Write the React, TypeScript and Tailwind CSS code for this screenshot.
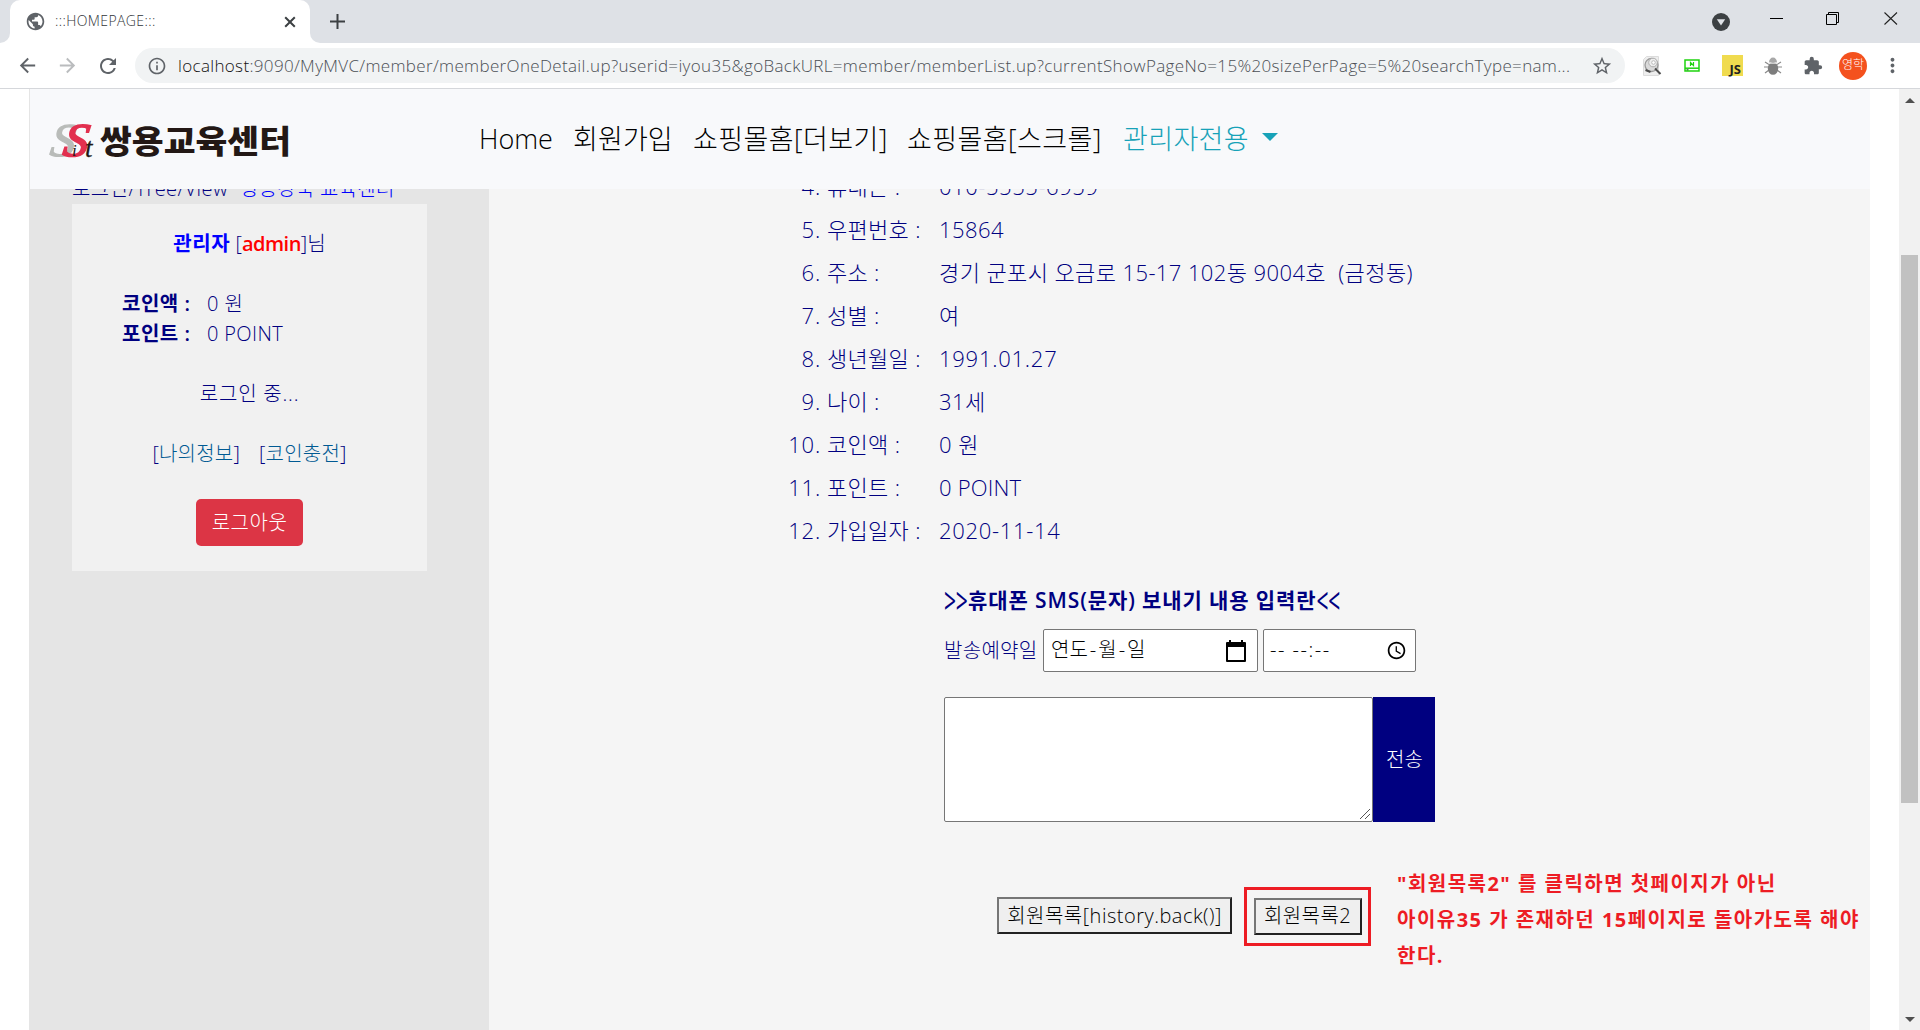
import {
  MdPublic, MdArrowBack, MdArrowForward, MdRefresh,
  MdInfoOutline, MdStarBorder, MdExtension, MdMoreVert, MdAccessTime,
} from "react-icons/md";

type Row = { no: string; label: string; value: string; track: string };

const rows: Row[] = [
  { no: "4.", label: "휴대폰 :", value: "010-5555-6959", track: "tracking-[0.56px]" },
  { no: "5.", label: "우편번호 :", value: "15864", track: "tracking-[0.45px]" },
  { no: "6.", label: "주소 :", value: "경기 군포시 오금로 15-17 102동 9004호  (금정동)", track: "tracking-[0.4px]" },
  { no: "7.", label: "성별 :", value: "여", track: "tracking-normal" },
  { no: "8.", label: "생년월일 :", value: "1991.01.27", track: "tracking-[0.75px]" },
  { no: "9.", label: "나이 :", value: "31세", track: "tracking-[0.4px]" },
  { no: "10.", label: "코인액 :", value: "0 원", track: "tracking-[0.5px]" },
  { no: "11.", label: "포인트 :", value: "0 POINT", track: "tracking-[0.2px]" },
  { no: "12.", label: "가입일자 :", value: "2020-11-14", track: "tracking-[0.7px]" },
];

function TabStrip() {
  return (
    <div className="flex h-[43px] shrink-0 bg-[#dee1e6]">
      <div className="w-[10px] bg-white">
        <div className="h-full rounded-br-[10px] bg-[#dee1e6]" />
      </div>
      <div className="flex w-[300px] items-center rounded-t-[10px] bg-white pl-[15px] pr-[14px]">
        <MdPublic className="mt-[-1px] size-[21px] text-[#5f6368]" />
        <span className="ml-[9px] mt-[-3px] flex-1 text-[14px] tracking-[0.4px] text-[#303438]">:::HOMEPAGE:::</span>
        <svg className="h-[12px] w-[12px]" viewBox="0 0 12 12" stroke="#3c4043" strokeWidth="2">
          <path d="M1.200 1.200l9.600 9.600M10.800 1.200l-9.600 9.600" />
        </svg>
      </div>
      <div className="w-[10px] bg-white">
        <div className="h-full rounded-bl-[10px] bg-[#dee1e6]" />
      </div>
      <svg className="ml-[10px] mt-[14px] h-[15px] w-[15px]" viewBox="0 0 15 15" stroke="#3c4043" strokeWidth="2">
        <path d="M7.500 0v15M0 7.500h15" />
      </svg>
      <div className="flex-1" />
      <svg className="mr-[40px] mt-[13px] h-[18px] w-[18px]" viewBox="0 0 18 18">
        <circle cx="9" cy="9" r="9" fill="#3c4043" />
        <path d="M4.8 6.3h8.4L9 12.4z" fill="#dee1e6" />
      </svg>
      <svg className="mr-[43px] mt-[12px] h-[14px] w-[13px]" viewBox="0 0 13 14">
        <path d="M0 6.5h13" stroke="#000" />
      </svg>
      <svg className="mr-[44px] mt-[12px] h-[13px] w-[14px]" viewBox="0 0 14 13" fill="none" stroke="#000">
        <path d="M.5 2.5h10v10H.5zM2.5 2.5v-2h10v10h-2" />
      </svg>
      <svg className="mr-[22px] mt-[12px] h-[13px] w-[14px]" viewBox="0 0 14 13" stroke="#222" strokeWidth="1.1">
        <path d="M.5.5l12.500 12M13 .5L.5 12.500" />
      </svg>
    </div>
  );
}

function Toolbar() {
  return (
    <div className="flex h-[46px] shrink-0 items-center border-b border-[#d5d7db] bg-white text-[#5f6368]">
      <MdArrowBack className="ml-[16px] size-[23px]" />
      <MdArrowForward className="ml-[17px] size-[23px] text-[#babcbe]" />
      <MdRefresh className="ml-[17px] size-[24px]" />
      <div className="ml-[15px] flex h-[35px] w-[1490px] items-center rounded-full bg-[#f1f3f4]">
        <MdInfoOutline className="ml-[12px] size-[20px]" />
        <div className="ml-[11px] w-[1400px] whitespace-pre text-[17px] leading-[35px] tracking-[0.34px] text-[#4b4f54]">
          <span className="text-[#111]">localhost</span>
          :9090/MyMVC/member/memberOneDetail.up?userid=iyou35&goBackURL=member/memberList.up?currentShowPageNo=15%20sizePerPage=5%20searchType=nam...
        </div>
        <MdStarBorder className="ml-[13px] size-[22px]" />
      </div>
      <svg className="ml-[18px] h-[20px] w-[19px]" viewBox="0 0 19 20" fill="none">
        <path d="M3.500.5H15.500v19H.5V3.500z" fill="#eee" stroke="#dcdcdc" />
        <circle cx="8.500" cy="9" r="6.500" fill="#dadada" stroke="#9a9a9a" strokeWidth="1.300" />
        <circle cx="10" cy="6.500" r="4.300" fill="#eee" stroke="#b0b0b0" />
        <circle cx="10.500" cy="6.500" r="1.800" fill="#fff" stroke="#bbb" />
        <path d="M2.500 14l5 2M12 12.500l5.500 5.500" stroke="#4b4b4b" strokeWidth="2" />
      </svg>
      <svg className="ml-[22px] h-[13px] w-[16px]" viewBox="0 0 16 13" fill="none">
        <path d="M1 1h14v11H1z" stroke="#1fd30f" strokeWidth="1.500" />
        <path d="M1 9.200h14" stroke="#1fd30f" strokeWidth="1.500" />
        <path d="M6.500 7V3.500l3 3V3" stroke="#1fd30f" strokeWidth="1.200" />
        <path d="M2.500 10.800h2" stroke="#0a5c05" />
      </svg>
      <div className="ml-[22px] flex size-[21px] items-end justify-end bg-[#f0db4f] pr-[2px] font-['Noto_Sans'] text-[13px] font-bold leading-[14px] text-[#222]">
        JS
      </div>
      <svg className="ml-[21px] h-[18px] w-[18px]" viewBox="0 0 18 18" fill="none">
        <path d="M1 5l4 2.500M17 5l-4 2.500M0 10h5M18 10h-5M1 16l4-3M17 16l-4-3" stroke="#8a8a8a" strokeWidth="1.200" />
        <path d="M5 5.500a4 5 0 0 1 8 0z" fill="#a8a8a8" />
        <ellipse cx="9" cy="11.500" rx="5.200" ry="6.300" fill="#7d7d7d" />
        <path d="M4.500 6.200h9" stroke="#eee" />
      </svg>
      <MdExtension className="ml-[21px] size-[20px]" />
      <div className="ml-[16px] flex size-[28px] items-center justify-center rounded-full bg-[#f4511e] pb-px text-[12px] text-white">
        영학
      </div>
      <MdMoreVert className="ml-[14px] size-[23px]" />
    </div>
  );
}

function Logo() {
  return (
    <svg className="ml-[18px] h-[48px] w-[250px]" viewBox="0 0 250 48">
      <g fontFamily="Liberation Serif" fontStyle="italic">
        <text transform="translate(1 41) skewX(-8)" fontSize="47" fill="#b9bcb9" stroke="#b9bcb9" strokeWidth="1.2" textLength="25" lengthAdjust="spacingAndGlyphs">S</text>
        <text transform="translate(14 41) skewX(-8)" fontSize="47" fill="#e2304f" stroke="#e2304f" strokeWidth="1.8" textLength="25" lengthAdjust="spacingAndGlyphs">S</text>
        <text x="24" y="41" fontSize="17" fill="#231815">i</text>
        <text x="37" y="41.500" fontSize="27" fill="#231815" stroke="#231815" strokeWidth=".3">t</text>
      </g>
      <text x="52" y="38" fontSize="31.500" fontWeight="900" fill="#231815" fontFamily="Noto Sans CJK KR" textLength="191" lengthAdjust="spacingAndGlyphs">
        쌍용교육센터
      </text>
    </svg>
  );
}

function NavBar() {
  return (
    <nav className="flex h-[100px] shrink-0 items-center bg-[#f8f9fb] text-[27px] text-black">
      <Logo />
      <div className="ml-[181px] flex items-center whitespace-pre pt-[1px]">
        <span className="w-[94px]">Home</span>
        <span className="w-[120px] tracking-[0.1px]">회원가입</span>
        <span className="w-[214px] tracking-[0.4px]">쇼핑몰홈[더보기]</span>
        <span className="w-[216px] tracking-[0.4px]">쇼핑몰홈[스크롤]</span>
        <span className="w-[139px] tracking-[0.36px] text-[#17a2b8]">관리자전용</span>
        <span className="mt-[-5px] border-x-[8px] border-t-[8px] border-x-transparent border-t-[#17a2b8]" />
      </div>
    </nav>
  );
}

function Sidebar() {
  return (
    <aside className="w-[459px] shrink-0 bg-[#e5e5e5] pl-[42px] text-[20px] leading-[30px] text-[#000080]">
      <div className="-mt-[15px] flex h-[30px] whitespace-pre">
        <span className="w-[168px] tracking-[0.4px]">로그인/Tree/View</span>
        <span className="tracking-[0.25px] text-[#0000ff]">쌍용강북 교육센터</span>
      </div>
      <div className="flex h-[367px] w-[355px] flex-col items-center bg-[#f1f1f1] pt-[25px]">
        <p className="whitespace-pre">
          <b className="font-semibold tracking-[0.6px] text-[#0000ff]">관리자</b> [<b className="font-semibold tracking-[-0.5px] text-[#ff0000]">admin</b>]님
        </p>
        <div className="mt-[30px] w-full whitespace-pre pl-[50px]">
          <div className="flex"><b className="w-[85px] font-semibold tracking-[0.5px]">코인액 :</b><span className="tracking-[0.5px]">0 원</span></div>
          <div className="flex"><b className="w-[85px] font-semibold tracking-[0.5px]">포인트 :</b><span className="tracking-[0.35px]">0 POINT</span></div>
        </div>
        <p className="mt-[30px] tracking-[0.8px]">로그인 중...</p>
        <div className="mt-[30px] flex gap-[19px]">
          <span className="tracking-[0.2px]">[<span className="text-[#005a93]">나의정보</span>]</span>
          <span className="tracking-[0.2px]">[<span className="text-[#005a93]">코인충전</span>]</span>
        </div>
        <div className="mt-[30px] flex h-[47px] w-[107px] items-center justify-center rounded-[5px] bg-[#dc3545] tracking-[0.5px] text-white">
          로그아웃
        </div>
      </div>
    </aside>
  );
}

function SmsForm() {
  return (
    <section className="ml-[455px] mt-[33px] text-[20px] text-[#000080]">
      <h2 className="flex whitespace-pre text-[21px] font-semibold leading-[30px] tracking-[0.9px]">
        <span className="w-[24px] scale-y-[1.7] font-normal tracking-[-0.3px]">{">>"}</span>
        <span>휴대폰 SMS(문자) 보내기 내용 입력란</span>
        <span className="scale-y-[1.7] font-normal tracking-[-0.3px]">{"<<"}</span>
      </h2>
      <div className="mt-[14px] flex items-center">
        <span className="w-[99px] tracking-[0.3px]">발송예약일</span>
        <div className="flex h-[43px] w-[215px] items-center justify-between rounded-[2px] border border-[#767676] bg-white pl-[7px] pr-[11px] text-black">
          <span className="flex pb-[2px]">연도<i className="px-[2px] not-italic">-</i>월<i className="px-[2px] not-italic">-</i>일</span>
          <svg className="h-[22px] w-[20px]" viewBox="0 0 20 22" fill="none">
            <path d="M1 3h18v18H1z" stroke="#000" strokeWidth="2" strokeLinejoin="round" />
            <path d="M1 2h18v5H1zM3 0h2v3H3zM15 0h2v3h-2z" fill="#000" />
          </svg>
        </div>
        <div className="ml-[5px] flex h-[43px] w-[153px] items-center justify-between rounded-[2px] border border-[#767676] bg-white pl-[6px] pr-[8px] text-black">
          <span className="whitespace-pre pb-[2px] tracking-[1.500px]">-- --:--</span>
          <MdAccessTime className="size-[21px]" />
        </div>
      </div>
      <div className="mt-[25px] flex">
        <div className="flex h-[125px] w-[429px] items-end justify-end rounded-[2px] border border-[#767676] bg-white">
          <svg className="mb-[2px] mr-[2px] h-[10px] w-[10px]" viewBox="0 0 10 10" stroke="#555">
            <path d="M0 10L10 0M5 10l5-5" />
          </svg>
        </div>
        <div className="flex h-[125px] w-[62px] items-center justify-center bg-[#000080] pl-px text-white">전송</div>
      </div>
    </section>
  );
}

function Actions() {
  return (
    <section className="ml-[508px] mt-[43px] flex items-start whitespace-pre text-[20px] text-black">
      <div className="mt-[32px] flex h-[37px] w-[235px] items-center justify-center border-2 border-b-[#222] border-l-[#767676] border-r-[#222] border-t-[#767676] bg-[#efefef] tracking-[0.5px]">
        회원목록[history.back()]
      </div>
      <div className="ml-[12px] mt-[22px] flex h-[59px] w-[127px] items-center justify-center border-[3px] border-[#ed1c24]">
        <div className="mt-[-1px] flex h-[37px] w-[108px] items-center justify-center border-2 border-b-[#222] border-l-[#767676] border-r-[#222] border-t-[#767676] bg-[#efefef] tracking-[0.390px]">
          회원목록2
        </div>
      </div>
      <p className="ml-[26px] mt-[1px] text-[20px] font-bold leading-[36px] tracking-[1.480px] text-[#ed1c24]">
        "회원목록2" 를 클릭하면 첫페이지가 아닌<br />아이유35 가 존재하던 15페이지로 돌아가도록 해야<br />한다.
      </p>
    </section>
  );
}

function Detail() {
  return (
    <main className="flex-1 bg-[#f5f5f5] text-[#000080]">
      <ol className="-mt-[24px] text-[22px] leading-[43px]">
        {rows.map((r) => (
          <li key={r.no} className="flex h-[43px] whitespace-pre">
            <span className="w-[332px] text-right tracking-[0.8px]">{r.no}</span>
            <span className="ml-[6px] w-[112px] tracking-[0.3px]">{r.label}</span>
            <span className={r.track}>{r.value}</span>
          </li>
        ))}
      </ol>
      <SmsForm />
      <Actions />
    </main>
  );
}

function ScrollBar() {
  return (
    <div className="flex w-[21px] flex-col items-center bg-[#f1f1f1]">
      <span className="mt-[9px] border-x-[5px] border-b-[5px] border-x-transparent border-b-[#505050]" />
      <div className="mt-[152px] h-[548px] w-[17px] bg-[#c1c1c1]" />
      <span className="mb-[8px] mt-auto border-x-[5px] border-t-[5px] border-x-transparent border-t-[#505050]" />
    </div>
  );
}

export default function App() {
  return (
    <div className="flex h-[1030px] w-[1920px] flex-col overflow-hidden bg-white font-['Open_Sans','Noto_Sans_CJK_KR',sans-serif] font-light">
      <TabStrip />
      <Toolbar />
      <div className="flex min-h-0 flex-1">
        <div className="ml-[29px] flex w-[1841px] flex-col border-l border-[#e5e5e5]">
          <NavBar />
          <div className="flex min-h-0 flex-1 overflow-hidden">
            <Sidebar />
            <Detail />
          </div>
        </div>
        <div className="flex-1" />
        <ScrollBar />
      </div>
    </div>
  );
}
